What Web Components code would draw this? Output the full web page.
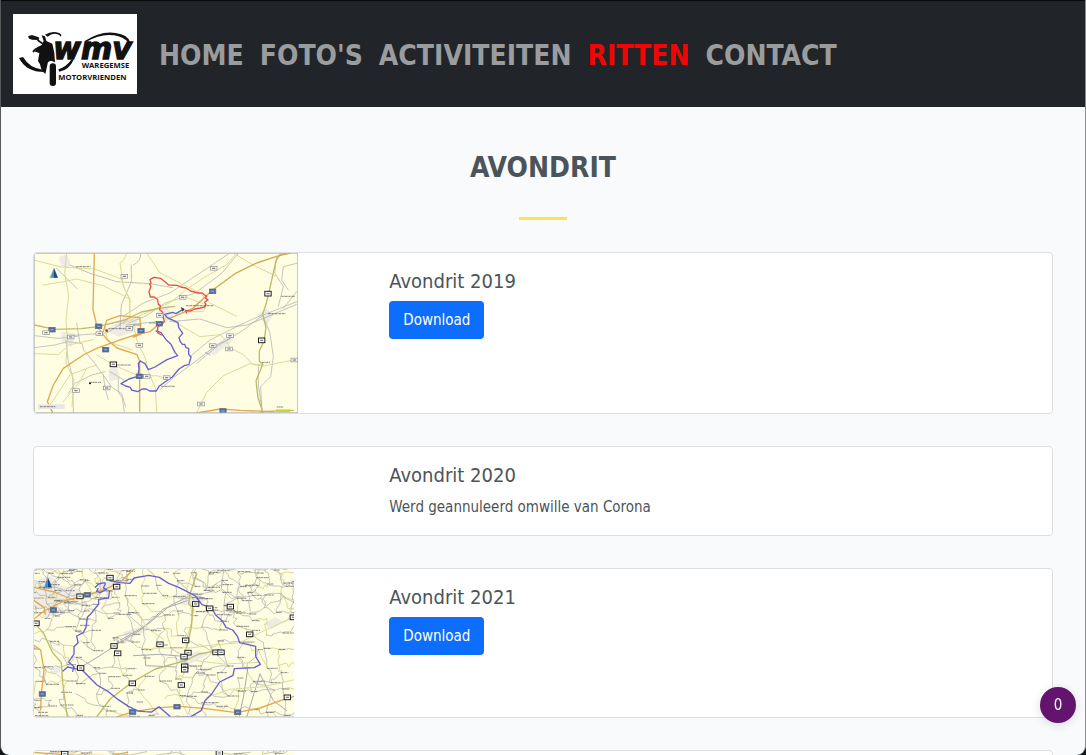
<!DOCTYPE html>
<html lang="nl">
<head>
<meta charset="utf-8">
<meta name="viewport" content="width=device-width, initial-scale=1">
<title>WMV Waregemse Motorvrienden - Ritten</title>
<style>
  html { background: #111417; }
  body { margin: 0; font-family: "DejaVu Sans Condensed", "DejaVu Sans", sans-serif; font-size: 15px; line-height: 24px; color: #4c5459; }
</style>
</head>
<body>
<wmv-app>
  <wmv-header slot="header">
    <wmv-logo slot="brand"></wmv-logo>
    <wmv-nav-link href="#home">HOME</wmv-nav-link>
    <wmv-nav-link href="#fotos">FOTO'S</wmv-nav-link>
    <wmv-nav-link href="#activiteiten">ACTIVITEITEN</wmv-nav-link>
    <wmv-nav-link href="#ritten" active>RITTEN</wmv-nav-link>
    <wmv-nav-link href="#contact">CONTACT</wmv-nav-link>
  </wmv-header>
  <wmv-section-title>AVONDRIT</wmv-section-title>
  <wmv-ride-card>
    <wmv-map-south slot="map"></wmv-map-south>
    <span slot="title">Avondrit 2019</span>
    <wmv-download href="#avondrit-2019">Download</wmv-download>
  </wmv-ride-card>
  <wmv-ride-card>
    <span slot="title">Avondrit 2020</span>
    <span>Werd geannuleerd omwille van Corona</span>
  </wmv-ride-card>
  <wmv-ride-card>
    <wmv-map-east slot="map"></wmv-map-east>
    <span slot="title">Avondrit 2021</span>
    <wmv-download href="#avondrit-2021">Download</wmv-download>
  </wmv-ride-card>
  <wmv-ride-card>
    <wmv-map-next slot="map"></wmv-map-next>
  </wmv-ride-card>
  <wmv-counter slot="overlay">0</wmv-counter>
</wmv-app>

<script>
const define = (name, html, setup) => {
  const template = document.createElement('template');
  template.innerHTML = html;
  customElements.define(name, class extends HTMLElement {
    connectedCallback() {
      if (this.shadowRoot) return;
      this.attachShadow({ mode: 'open' }).append(template.content.cloneNode(true));
      if (setup) setup(this, this.shadowRoot);
    }
  });
};

define('wmv-app', `
<style>
  :host { display: flex; flex-direction: column; height: 100vh; box-sizing: border-box; border-left: 1px solid #55595c; border-right: 1px solid #8a8e91; border-radius: 0 0 9px 9px; overflow: hidden; background: #f8fafc; }
  main { flex: 1; min-height: 0; overflow: auto; scrollbar-width: none; padding: 0 32px 32px; }
</style>
<slot name="header"></slot>
<main><slot></slot></main>
<slot name="overlay"></slot>`);

define('wmv-header', `
<style>
  :host { display: flex; flex-wrap: wrap; align-items: center; gap: 22px; padding: 13px 12px; background: #212529; border-top: 1px solid #07090a; }
  nav { display: flex; flex-wrap: wrap; gap: 16px; padding-top: 4px; }
</style>
<slot name="brand"></slot>
<nav><slot></slot></nav>`);

const setLink = (host, root) => {
  root.querySelector('a').href = host.getAttribute('href');
};

define('wmv-nav-link', `
<style>
  :host { display: block; }
  a { display: block; font-weight: 700; font-size: 28px; line-height: 42px; color: #9a9c9e; text-decoration: none; }
  :host([active]) a { color: #f20505; }
</style>
<a><slot></slot></a>`, setLink);

define('wmv-logo', `
<style>
  :host { display: block; width: 124px; }
  svg { display: block; width: 100%; height: auto; }
  text { font-family: "Open Sans", "Noto Sans", sans-serif; font-weight: 700; fill: #111; }
  .name { font-family: "DejaVu Sans", sans-serif; font-style: italic; stroke: #111; stroke-width: 4; }
</style>
<svg viewBox="0 0 372 240" role="img" aria-label="WMV Waregemse Motorvrienden">
  <rect width="372" height="240" fill="#fff"/>
  <g fill="#111">
    <path d="M45 68q4-6 14-4l18 6q4 5-1 8l-19-1q-10-2-12-9z"/>
    <path d="M75 76l16 12-2 4-17-12z"/>
    <path d="M86 64l10 3 4 14 18 8 6 28 2 28-12-5-9 4-8 36q-12-7-16-29l-6-10 4-24-13-4 8-14 12-6 6-12z"/>
    <path d="M58 112q8-14 26-14l2 5q-15 1-24 13z"/>
    <path d="M96 62q22-13 42-5 10 4 6 11-4-6-13-8-15-3-27 8z"/>
    <path d="M18 132l12-3q21 35 60 38l4 7q-55 0-76-42z"/>
    <rect x="110" y="148" width="19" height="68" rx="9"/>
    <path d="M136 166q24-7 40-30l6 1q-13 30-43 36z"/>
    <path d="M214 82q48-32 94-25 36 5 43 27l-6 1q-14-17-42-21-40-6-84 20z"/>
  </g>
  <g>
    <text class="name" x="121" y="135" font-size="90">wmv</text>
    <text x="206" y="162" font-size="23">WAREGEMSE</text>
    <text x="136" y="198" font-size="23">MOTORVRIENDEN</text>
  </g>
</svg>`);

define('wmv-section-title', `
<style>
  :host { display: flex; flex-direction: column; align-items: center; padding: 41px 0 32px; }
  h2 { margin: 0 0 29px; font-size: 28px; line-height: 40px; font-weight: 700; color: #4a545a; }
  hr { margin: 0; border: 0; width: 48px; height: 3px; background: #fbe44f; }
</style>
<h2><slot></slot></h2><hr>`);

define('wmv-ride-card', `
<style>
  :host { display: grid; grid-template-columns: 1fr 2fr; margin-bottom: 32px; background: #fff; border: 1px solid #dcdee0; border-radius: 4px; overflow: hidden; }
  .body { padding: 16px; }
  h5 { margin: 0 0 8px; font-size: 20px; line-height: 24px; font-weight: 400; color: #4c5459; }
</style>
<div><slot name="map"></slot></div>
<div class="body"><h5><slot name="title"></slot></h5><slot></slot></div>`);

define('wmv-download', `
<style>
  :host { display: block; width: fit-content; }
  a { display: block; padding: 7px 14px; border-radius: 4px; background: #0d6efd; color: #fff; text-decoration: none; }
</style>
<a download><slot></slot></a>`, setLink);

define('wmv-counter', `
<style>
  :host { position: fixed; right: 10px; bottom: 32px; }
  button { display: block; width: 36px; height: 36px; padding: 0; border: 0; border-radius: 50%; background: #63146c; color: #fff; font: inherit; box-shadow: 0 2px 10px #0002; }
</style>
<button type="button"><slot></slot></button>`);

/* Map drawing: shared line styles, place-name marks and road shields. */
const mapStyle = `
<style>
  :host { display: block; }
  svg { display: block; height: auto; max-width: 100%; }
  path { fill: none; stroke-linejoin: round; stroke-linecap: round; }
  .area { fill: #e6e3e4; opacity: .7; }
  .minor { stroke: #aaa; stroke-width: 2; }
  .rail { stroke: #9a9aa0; stroke-width: 2; stroke-dasharray: 4 3; }
  .local { stroke: #dbda98; stroke-width: 3; }
  .main { stroke: #bfbb66; stroke-width: 4; }
  .motor { stroke: #e3a850; stroke-width: 4; }
  .blue { stroke: #6661d2; stroke-width: 4; }
  .red { stroke: #e6504a; stroke-width: 4; }
  .name { stroke: #55555c; stroke-width: 3; stroke-dasharray: 6 1 3 1 8 2; stroke-linecap: butt; opacity: .7; }
</style>`;

const names = list => `<path class="name" d="${list.map(([x, y, w]) => `M${x} ${y}h${w}`).join('')}"/>`;
const shields = (list, kind) => list.map(([x, y]) => {
  const [w, h, fill, edge] = kind === 'blue' ? [19, 14, '#496ea8', '#667'] : kind === 'dark' ? [19, 14, '#fff', '#222'] : [20, 11, '#fff', '#888'];
  return `<rect x="${x - w / 2}" y="${y - h / 2}" width="${w}" height="${h}" fill="${fill}" stroke="${edge}" stroke-width="${kind === 'dark' ? 3 : 2}"/>
    <rect x="${x - w / 4}" y="${y - 2}" width="${w / 2}" height="4" fill="${kind === 'blue' ? '#8fa5cc' : '#888'}"/>`;
}).join('');
const north = (x, y, s) => `<path d="M${x} ${y - s}l${s * .8} ${s * 2}h${-s * 1.6}z" style="fill:#3d93cc;stroke:#888;stroke-width:1"/><path d="M${x} ${y - s}l${s * .8} ${s * 2}h${-s * .8}z" style="fill:#174d82"/>`;

/* Repeatable net of small country roads, wandering around a coarse grid. */
const roadNet = (left, top, width, height, cell, seed) => {
  let s = seed;
  const rnd = () => (s = (s * 16807) % 2147483647) / 2147483647;
  const cols = Math.ceil(width / cell) + 1, rows = Math.ceil(height / cell) + 1;
  const at = [];
  for (let r = 0; r < rows; r++) for (let c = 0; c < cols; c++)
    at.push([left + (c + (rnd() - .5) * .8) * cell, top + (r + (rnd() - .5) * .8) * cell]);
  let grey = '', yellow = '';
  const labels = [];
  const join = (a, b) => {
    const j = () => (rnd() - .5) * cell * .35;
    const p = t => `${Math.round(a[0] + (b[0] - a[0]) * t + j())} ${Math.round(a[1] + (b[1] - a[1]) * t + j())}`;
    const d = `M${a.map(Math.round).join(' ')}L${p(.25)}L${p(.5)}L${p(.75)}L${b.map(Math.round).join(' ')}`;
    if (rnd() < .2) yellow += d; else grey += d;
  };
  for (let r = 0; r < rows; r++) for (let c = 0; c < cols; c++) {
    const n = at[r * cols + c];
    if (c + 1 < cols && rnd() < .68) join(n, at[r * cols + c + 1]);
    if (r + 1 < rows && rnd() < .6) join(n, at[(r + 1) * cols + c]);
    if (r + 1 < rows && c + 1 < cols && rnd() < .22) join(n, at[(r + 1) * cols + c + 1]);
    if (rnd() < .75) labels.push([Math.round(n[0]), Math.round(n[1]), 14 + Math.round(rnd() * 24)]);
  }
  return `<path class="local" d="${yellow}"/><path class="minor" d="${grey}"/>${names(labels)}`;
};

define('wmv-map-south', `${mapStyle}<style>svg { width: 264px; }</style>
<svg viewBox="12 14 792 480" role="img" aria-label="Kaart avondrit 2019">
  <rect x="12" y="14" width="792" height="480" fill="#fffde2"/>
  <path class="area" d="M88 26l22-8 12 26-6 14-24-6zM225 245l40-25 30-20 30 10-10 40-50 15zM95 250l40 5-10 40-30-15zM680 200l30-20 20 20-20 30zM380 190l30-15 20 25-25 25zM525 315l70-55 20 10-60 50zM235 365l25-15 10 40-30 10z"/>
  <path class="minor" d="M310 50q25-12 22-34M14 298l60-8 40-10 42 5 5 20 30 36 40 55 14 20 30 20 12 40M108 275l6 60 14 50 2 109M225 370l-40 10-50 25-20 30M150 285l-10-60M240 370l50 30M500 345l60-50 80-50 60-45 100-40M480 325l60-50 90-45 65-30M700 205l20 50 10 70-8 60-30 30 4 80M740 24l-6 50 26 40-15 60M800 45l-40 10-5 40 20 30M800 130l-40 50M600 14l-90 60-90 60-80 30-60 40M626 14l-50 60-80 60-90 30-60 40-50 20M14 262l70 8 60-6M265 390l0 40 12 20 6 40M220 380l5 40 10 34"/>
  <path class="rail" d="M120 50l60 25 80 25 100 6 68 12M420 220l90-8 80 26 60-8 46-18 104-44M290 230l90-10M120 262l110-8 66-42M270 240l4-70 30-70 0-50M80 60l60 60M540 320l-14-8M390 424l40-36 60-44 70-54 40-20M685 350l0 60 12 80"/>
  <path class="local" d="M14 36l80 20 100 6 80 30 10 30 15 30 0 40M110 14l-6 60 12 70-8 70 4 60-4 70 24 50-6 80M40 110l60-10 40-8 80 20 80 40M14 316l70 3 36-30 70-15M350 14l40 60 120 60 30 30 80 40M290 14q-10 26-20 30l10 70 20 40 0 60M620 14l-30 35-70 40-50 34-50 40-80 34-60 30M610 14l60 36 68 34M450 140l80 30-10 20-50 0M400 205l40 20 70 40 60-6 20 20 10 20 40 20 30 30 30 4 100-20M700 350l-40-4-80 36-50 50-30 62M310 230l12 50 24 50 10 40 20 50 4 74M225 235l8 40 15 10 60 20M200 320l60 34 70 30 50-2 30 10M60 470l60-90 50-20M100 460l50-60 20-40 30-10"/>
  <path class="main" d="M14 230l60 13 80-2 50-6 80-20 50-24 60-12 40-5M780 14l-30 4-12 20-18 80-12 50-10 30 10 40-6 40-14 30 0 30 10 10-20 50 6 50 20 59"/>
  <path class="motor" d="M193 14l-4 170 12 50 30 40 30 25 60 20 8 20 0 150M220 250l10-34 40-14 60 6 2 50-22 8M500 494l70-12 60 4 100 4M690 490l100-4M388 226l-28 24-40 8-54 18-66 24-40 20-60 40-30 50-18 50 22 45"/>
  <path class="motor" style="stroke:#cfab52" d="M780 14l-40 10-60 20-65 32-68 50-60 55-70 30"/>
  <path class="blue" d="M458 184l-20 12-10-4-24 6 8 10 18 8 14 7 2 14 12 18-11 13 4 12 6 8 7 0 4 10 8 2 0 18 7 8-6 22-14 4-16 10-20 24-18 12-22 16-8 14-20 0-10-6-12 0-14 8-18-5-4-8-14-4-14-7 24-14 26-8 4-22-2-16 6-8 14 8 10 18 20-8 36-22 32-12-8-10-12-24-15-14-15-21-15-5"/>
  <path class="red" d="M470 194l-4-8 16 2 12-6 16-3 14-3 4-8-4-6 10-8-8-4 4-6-14-10-12 0-22-6-14-9-16-3-10-5-26-1-14-12-10-8-20-3-12 7 3 10-4 4 4 6-6 16 4 16 12 0 10 8 2 14 6 4-2 12 8 6 2 12 4 18-8 8-4 0-8 10 0 16 12 6"/>
  <path d="M452 176l12 6-6 8z" style="fill:#164c3b"/>
  ${names([[138,55,44],[468,172,82],[714,196,52],[754,144,40],[696,342,24],[262,350,42],[182,402,32],[235,241,56],[358,224,24],[310,230,24],[394,414,40],[740,476,20]])}
  ${shields([[66,244],[206,234],[333,247],[388,226],[227,304],[328,384],[548,129],[579,488]], 'blue')}
  ${shields([[714,136],[695,276],[250,348]], 'dark')}
  ${shields([[551,60],[283,84],[458,147],[389,201],[600,262],[548,292],[597,302],[328,291],[48,253],[122,266],[208,256],[298,240],[410,388],[350,384],[230,419],[138,427],[513,467],[793,335]], 'light')}
  <circle cx="180" cy="405" r="3"/><circle cx="230" cy="247" r="4" fill="#844"/>
  <rect x="24" y="468" width="80" height="14" fill="#e6e6e2"/>${names([[30,475,46]])}
  <rect x="738" y="483" width="42" height="8" fill="#c8d631"/>
  ${north(72, 74, 14)}
  <rect x="13" y="15" width="790" height="478" fill="none" stroke="#aab4b8" stroke-width="2"/>
</svg>`);

define('wmv-map-east', `${mapStyle}<style>svg { width: 260px; }</style>
<svg viewBox="12 15 780 444" role="img" aria-label="Kaart avondrit 2021">
  <rect x="12" y="15" width="780" height="444" fill="#fffde2"/>
  <path class="area" d="M12 50l50-14 30 30 60 10-10 40-60 10-68 10zM200 60l50-12 20 20-60 14zM450 95l40-14 40 24-30 24-50-8zM455 275l50-14 30 10-50 26-34 10zM700 180l34-20 30 14-40 20zM40 130l60 0 0 20-60 10zM280 205l60-20 20 10-70 34zM60 315l30-10 0 20-26 6z"/>
  ${roadNet(12, 15, 780, 444, 47, 4127)}
  ${roadNet(12, 15, 250, 130, 36, 73)}
  ${roadNet(500, 15, 290, 90, 42, 911)}
  <path class="minor" style="stroke-width:3" d="M480 95l-60 30-60 50-40 30-50 30-60 40-50 30M472 110l-70 24-60 54-70 40M310 275l80-4 70 6M345 275l2 30 90 4M654 310l-14 90-12 56M690 330l-40 130M690 330l40 80 40 30"/>
  <path class="local" d="M490 15l-20 60 10 40 8 50-18 60-4 50 0 40-14 40-4 40 26 60M264 280l14 55M360 260l20-8 100 0 60-8 90-8 60-30 90-42M500 290l80 10 110-5M530 400l70-24 100-8 90-20M320 140l30 50 50 36M12 100l100 8 90-20 80-40"/>
  <path class="main" d="M14 178l26 28 28 60 26 30 4 60 14 104M200 459l40-54 66-50 70-40 90-25 40-20 60-10M500 30l-20 60-4 30 12 10-4 60-14 60"/>
  <path class="motor" d="M12 165l30-24 60-30 70-18 60-20 40-20 40-38M12 70l60 14 60 24M12 110l30 20 4 20M12 244l20 14 10 60-8 70-2 50M260 459l50-16 80-12 60-4 70 6 100 13 70-14 70-25 32-10"/>
  <path class="blue" d="M196 70l10-10 18-4 2 4-6 12 10 4-20 10-10-4 4-8M240 50l30 6 30 2 12-16 44-8 32 6 28 18 30 12 20 10 30 16 20 26 30 10 10 20 22 20 10 18 20 8 15 20 6 18 48 11 0 30 14 24-18 10-60 3-4 20-40 20-24 36-20 20-12 30-30 18-60 2-36-32-22 16-20-1-20-2-30-14-30-20-30-24-34-20-44-44-44-10-14 12M238 82l-2 20-30 4 0 14-24 30-10 10-4 30-8 16-20 10 4 20-12 12 0 22-16 24 16 14-4 14"/>
  ${shields([[172,92],[70,138],[37,390],[441,428],[308,444],[623,445]], 'blue')}
  ${shields([[240,41],[260,68],[150,97],[152,312],[252,246],[263,268],[390,241],[307,358],[467,229],[474,266],[462,278],[464,307],[464,317],[454,363],[497,120],[539,133],[601,128],[659,211],[558,265],[573,265],[772,400],[18,178],[790,160]], 'dark')}
  ${names([[72,110,22],[340,88,40],[362,200,30],[500,104,34],[560,152,44],[514,416,54],[320,414,20],[24,445,30],[15,455,40],[645,64,44],[150,184,30]])}
  ${north(54, 56, 14)}
  <path d="M12 458h780" style="stroke:#bbb;stroke-width:2"/>
</svg>`);

define('wmv-map-next', `${mapStyle}<style>svg { width: 260px; }</style>
<svg viewBox="12 0 780 444" role="img" aria-label="Kaart volgende avondrit">
  <rect x="12" width="780" height="444" fill="#fffde2"/>
  ${roadNet(12, 5, 780, 440, 46, 2203)}
  <path class="minor" d="M240 6l60 6 50-10M380 12l60-8 30 10M560 2l40 8 60-6M700 8l40-6"/>
  <path class="motor" d="M12 4l100 8 130 2 50-10"/>
  <path class="blue" d="M240 40l60 60 200 30 100 120"/>
  ${shields([[104, 8], [568, 6]], 'dark')}
</svg>`);
</script>
</body>
</html>
